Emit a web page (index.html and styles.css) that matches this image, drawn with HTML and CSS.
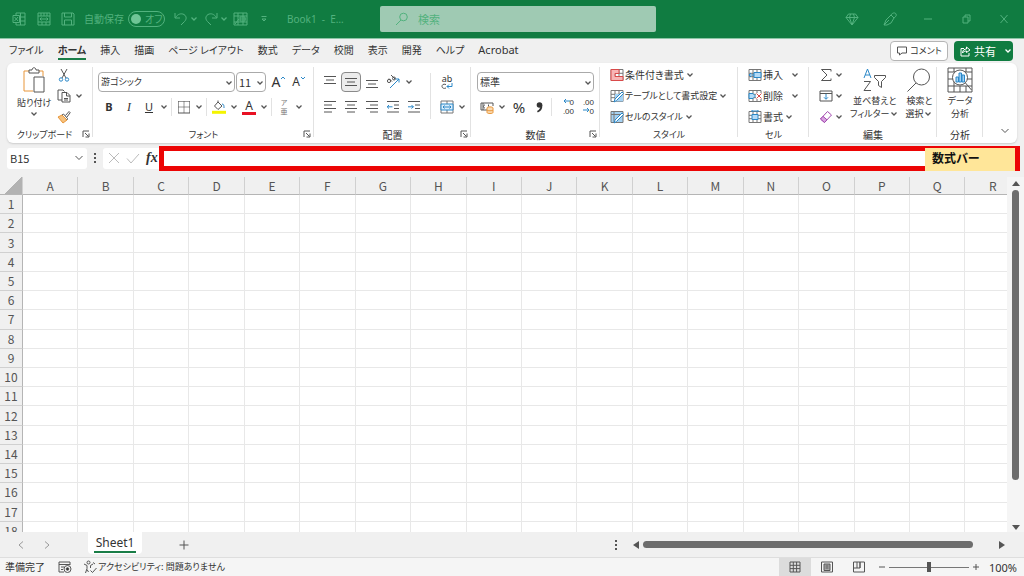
FILE: index.html
```html
<!DOCTYPE html>
<html lang="ja">
<head>
<meta charset="utf-8">
<title>Book1 - Excel</title>
<link rel="stylesheet" href="styles.css">
</head>
<body>
<svg class="defs" aria-hidden="true">
  <symbol id="chev" viewBox="0 0 8 8"><path d="M2 2.800 4 4.800l2-2"/></symbol>
  <symbol id="launch" viewBox="0 0 8 8"><path d="M1 7V1h6M3 3l3.500 3.500M7 3.500V7H3.500"/></symbol>
  <symbol id="cells" viewBox="0 0 14 14"><path stroke="#777" d="M1 1.500h12v11H1zM1 5.300h12M1 8.700h12M5 1.500v11M9 1.500v11"/></symbol>
</svg>

<header class="title">
  <div class="title-left">
    <svg class="i16 t-app" viewBox="0 0 16 16"><path d="M5 4V2h9v12H5v-2M9.500 2v12M9 6h5M9 10h5M2 4.500h6.500v7H2zM3.500 6l3.500 4M7 6l-3.500 4"/></svg>
    <svg class="i16 t-tpl" viewBox="0 0 16 16"><path d="M2 2h12v12H2zM2 5h12M5 2v3M8 2v3M11 2v3M2 11h12M4 8h8M5.500 6.500 4 8l1.500 1.500M10.500 6.500 12 8l-1.500 1.500M6 11v3M10 11v3"/></svg>
    <svg class="i16 t-save" viewBox="0 0 16 16"><path d="M2 2h11l1 1v11H2zM4.500 2v4h7V2M4.500 14V9h7v5"/></svg>
    <label class="auto" for="autosave">自動保存</label>
    <span class="switch"><input id="autosave" type="checkbox"><span class="switch-text">オフ</span></span>
    <button class="plain" aria-label="元に戻す"><svg class="i16" viewBox="0 0 16 16"><path d="M2 2v5h5M2.500 6.500C5 3 8 2 11 3.500c3 2 2.500 5 .5 7L8 14"/></svg></button>
    <svg class="chev"><use href="#chev"/></svg>
    <button class="plain t-redo" aria-label="やり直し"><svg class="i16" viewBox="0 0 16 16"><path d="M14 2v5H9M13.500 6.500C11 3 8 2 5 3.500c-3 2-2.500 5-.5 7L8 14"/></svg></button>
    <svg class="chev"><use href="#chev"/></svg>
    <svg class="i16 t-grid" viewBox="0 0 16 16"><path d="M1 2h13v12H1zM1 5h13M1 11h13M5 2v12M10 2v12M7 6h5v4H7zM2 13l4-5M7 8h6"/></svg>
    <svg class="t-more" viewBox="0 0 8 8"><path d="M1.500 1.500h5M2 4h4L4 6z"/></svg>
    <span class="book">Book1&nbsp; -&nbsp; E…</span>
  </div>
  <label class="search"><svg class="i16" viewBox="0 0 16 16"><circle cx="9.500" cy="6" r="3.800"/><path d="M7 9l-5 5"/></svg><input type="text" placeholder="検索" aria-label="検索"></label>
  <div class="title-right">
    <button class="plain" aria-label="Premium"><svg class="i16" viewBox="0 0 16 16"><path d="M4.500 3h7L14 6.500 8 14 2 6.500zM2 6.500h12M6.500 3 5.500 6.500 8 14l2.500-7.500L9.500 3"/></svg></button>
    <button class="plain" aria-label="描画"><svg class="i16" viewBox="0 0 16 16"><path d="M2 14l2-5 5-5 3 3-3 5-4 2zM9 4c1-2 4-3 5-1s-1 3-2 4M2 14l5-5"/></svg></button>
    <button class="plain" aria-label="最小化"><svg class="i16" viewBox="0 0 16 16"><path d="M4 8h8"/></svg></button>
    <button class="plain" aria-label="元のサイズに戻す"><svg class="i16" viewBox="0 0 16 16"><path d="M5 6h5v6H5zM7 6V4h5v6h-2"/></svg></button>
    <button class="plain" aria-label="閉じる"><svg class="i16" viewBox="0 0 16 16"><path d="M4.500 4l7 8M11.500 4l-7 8"/></svg></button>
  </div>
</header>

<nav class="tabs">
  <a href="#">ファイル</a><a href="#" class="on">ホーム</a><a href="#">挿入</a><a href="#">描画</a><a href="#">ページ レイアウト</a><a href="#">数式</a><a href="#">データ</a><a href="#">校閲</a><a href="#">表示</a><a href="#">開発</a><a href="#">ヘルプ</a><a href="#" class="latin">Acrobat</a>
  <button class="comment"><svg class="i12" viewBox="0 0 12 12"><path d="M1.500 2h9v6H6L3.500 10V8h-2z"/></svg>コメント</button>
  <button class="share"><svg class="i12" viewBox="0 0 12 12"><path d="M5 3.500H2V11h8V8M3.500 8c0-3 2-4 4-4V2L11 5 7.500 7.500V6c-2 0-3 .5-4 2z"/></svg>共有<svg class="chev"><use href="#chev"/></svg></button>
</nav>

<section class="ribbon">
  <div class="group clip">
    <div class="body">
      <button class="big"><svg class="paste" viewBox="0 0 24 28"><path class="or" d="M7 4H2v20h9M17 4h4v5"/><path d="M7 6V3h3c0-3 4-3 4 0h3v3zM12 10h10v15H12z" fill="#fff"/></svg>貼り付け<svg class="chev"><use href="#chev"/></svg></button>
      <div class="stack">
        <button class="plain" aria-label="切り取り"><svg class="i14" viewBox="0 0 14 14"><path d="M4 1l5 9M10 1 5 10"/><g class="bl"><circle cx="4" cy="11.500" r="1.700"/><circle cx="10" cy="11.500" r="1.700"/></g></svg></button>
        <button class="plain" aria-label="コピー"><svg class="i14" viewBox="0 0 14 14"><path d="M5 11H1V1h5l1.500 1.500M5 3.500h5l3 3V13H5zM9.500 3.500V7H13M7 9.500h4M7 11h4"/></svg></button>
        <button class="plain" aria-label="書式のコピー"><svg class="i14" viewBox="0 0 14 14"><path class="or" fill="#f6c27e" d="M1 7l4-2 5 5-4 3z"/><path d="M5 5l1.500-1 4 4.500L10 10M8.500 5.500 12 1.500l1.200 1.200L10 7"/></svg></button>
      </div>
      <svg class="chev copy-chev"><use href="#chev"/></svg>
    </div>
    <div class="cap kana">クリップボード<button class="launch" aria-label="クリップボードの設定"><svg><use href="#launch"/></svg></button></div>
  </div>

  <div class="group font">
    <div class="body rows">
      <div class="row">
        <span class="sel grow kana"><select aria-label="フォント"><option>游ゴシック</option></select><svg class="chev"><use href="#chev"/></svg></span>
        <span class="sel size"><select aria-label="サイズ"><option>11</option></select><svg class="chev"><use href="#chev"/></svg></span>
        <button class="tool letter lg">A<svg class="tick" viewBox="0 0 6 6"><path d="M1 4l2-2 2 2"/></svg></button>
        <button class="tool letter">A<svg class="tick" viewBox="0 0 6 6"><path d="M1 2l2 2 2-2"/></svg></button>
      </div>
      <div class="row inset">
        <button class="tool letter b">B</button><button class="tool letter i">I</button><button class="tool letter u">U</button><svg class="chev"><use href="#chev"/></svg>
        <i class="sep"></i>
        <button class="tool" aria-label="罫線"><svg class="i14" viewBox="0 0 14 14"><path d="M1 1.500h12M1.500 1v12M12.500 1v12M7 1v12M1 7h12" opacity=".6"/><path d="M1 13h12"/></svg></button><svg class="chev"><use href="#chev"/></svg>
        <i class="sep"></i>
        <button class="tool" aria-label="塗りつぶしの色"><svg class="i14" viewBox="0 0 14 14"><path d="M6 2l4 4-4 3.500L2.500 6zM6 2V.5"/><path class="bl" d="M10 4c2 0 2 2 2 4"/><path class="yl" d="M0 12.300h14"/></svg></button><svg class="chev"><use href="#chev"/></svg>
        <button class="tool letter fontcolor">A</button><svg class="chev"><use href="#chev"/></svg>
        <i class="sep"></i>
        <button class="tool ruby"><span>ア</span><span>亜</span></button><svg class="chev"><use href="#chev"/></svg>
      </div>
    </div>
    <div class="cap kana">フォント<button class="launch" aria-label="フォントの設定"><svg><use href="#launch"/></svg></button></div>
  </div>

  <div class="group align">
    <div class="body">
      <div class="rows">
        <div class="row gap1">
          <button class="tool" aria-label="上揃え"><svg class="i14" viewBox="0 0 14 14"><path d="M1 1.500h12M3 5h8M1 8.500h12"/></svg></button>
          <button class="tool pressed" aria-label="上下中央揃え"><svg class="i14" viewBox="0 0 14 14"><path d="M1 3.500h12M3 7h8M1 10.500h12"/></svg></button>
          <button class="tool" aria-label="下揃え"><svg class="i14" viewBox="0 0 14 14"><path d="M1 5.500h12M3 9h8M1 12.500h12"/></svg></button>
          <button class="tool" aria-label="方向"><svg class="i14" viewBox="0 0 14 14"><circle cx="3" cy="6" r="1.600"/><path d="M3 3.500l3 3M5 0l4 4"/><circle cx="8" cy="3.500" r="1.500"/><path class="bl" d="M4 13 13 4M9.500 4H13v3.500"/></svg></button><svg class="chev"><use href="#chev"/></svg>
        </div>
        <div class="row gap1">
          <button class="tool" aria-label="左揃え"><svg class="i14" viewBox="0 0 14 14"><path d="M1 1.500h12M1 5h8M1 8.500h12M1 12h8"/></svg></button>
          <button class="tool" aria-label="中央揃え"><svg class="i14" viewBox="0 0 14 14"><path d="M1 1.500h12M3 5h8M1 8.500h12M3 12h8"/></svg></button>
          <button class="tool" aria-label="右揃え"><svg class="i14" viewBox="0 0 14 14"><path d="M1 1.500h12M5 5h8M1 8.500h12M5 12h8"/></svg></button>
          <button class="tool" aria-label="インデントを減らす"><svg class="i14" viewBox="0 0 14 14"><path d="M1 1.500h12M8 5h5M8 8.500h5M1 12h12"/><path class="bl" d="M6.500 6.800H1M3 5 1.200 6.800 3 8.600"/></svg></button>
          <button class="tool" aria-label="インデントを増やす"><svg class="i14" viewBox="0 0 14 14"><path d="M1 1.500h12M8 5h5M8 8.500h5M1 12h12"/><path class="bl" d="M1 6.800h5.500M4.500 5l1.800 1.800-1.800 1.800"/></svg></button>
        </div>
      </div>
      <i class="sep tall"></i>
      <div class="rows">
        <div class="row"><button class="tool wrap"><span>ab</span><svg class="wrapline" viewBox="0 0 12 7"><path d="M5 1.500C2 .5 1 2 1 3.500S3 6 5 5"/><path class="bl" d="M11 0v3.500H6M8 1.500l-2 2 2 2"/></svg></button></div>
        <div class="row"><button class="tool" aria-label="セルを結合"><svg class="i14" viewBox="0 0 14 14"><path stroke="#777" d="M1 1h12v12H1zM7 1v3M7 10v3"/><path class="bl" fill="#dceefb" d="M1 4h12v6H1z"/><path class="bl" d="M3 7h8M4.500 5.500 3 7l1.500 1.500M9.500 5.500 11 7 9.500 8.500"/></svg></button><svg class="chev"><use href="#chev"/></svg></div>
      </div>
    </div>
    <div class="cap">配置<button class="launch" aria-label="配置の設定"><svg><use href="#launch"/></svg></button></div>
  </div>

  <div class="group number">
    <div class="body rows">
      <div class="row"><span class="sel grow"><select aria-label="表示形式"><option>標準</option></select><svg class="chev"><use href="#chev"/></svg></span></div>
      <div class="row">
        <button class="tool" aria-label="通貨"><svg class="i14" viewBox="0 0 14 14"><path d="M7 10H1V3h12v3M5 5c-2 0-2 3 0 3M3 3v7M8.500 4.500v2"/><path class="or" fill="#fbdcb4" d="M7 8c0-1.500 6-1.500 6 0v4.500c0 1.300-6 1.300-6 0z"/><path class="or" d="M7 10c0 1 6 1 6 0"/></svg></button><svg class="chev"><use href="#chev"/></svg>
        <button class="tool pct">%</button>
        <button class="tool" aria-label="桁区切り"><svg class="i14" viewBox="0 0 14 14"><circle cx="7.500" cy="5" r="2.800" fill="#333" stroke="none"/><path stroke="#333" stroke-width="1.800" d="M9.400 5c.2 3-1.200 5.500-4 6.800"/></svg></button>
        <i class="sep"></i>
        <button class="tool dec"><span><svg class="arr" viewBox="0 0 7 6"><path class="bl" d="M7 3H1M3 1 1 3l2 2"/></svg>0</span><span>.00</span></button>
        <button class="tool dec"><span>.00</span><span><svg class="arr" viewBox="0 0 7 6"><path class="bl" d="M0 3h6M4 1l2 2-2 2"/></svg>0</span></button>
      </div>
    </div>
    <div class="cap">数値<button class="launch" aria-label="数値の設定"><svg><use href="#launch"/></svg></button></div>
  </div>

  <div class="group style">
    <div class="body list">
      <button class="item"><svg class="i14" viewBox="0 0 14 14"><use href="#cells"/><path class="rd" fill="#f7b5b5" d="M1 1.500h8v4H5v3h8v4H1z"/></svg>条件付き書式<svg class="chev"><use href="#chev"/></svg></button>
      <button class="item kana"><svg class="i14" viewBox="0 0 14 14"><use href="#cells"/><path fill="#a5d2f3" stroke="none" d="M5 5h8v7.500H5z"/><path class="bl" fill="#fff" d="M4 13l1-3 7-7 1.500 1.500-7 7z"/></svg>テーブルとして書式設定<svg class="chev"><use href="#chev"/></svg></button>
      <button class="item kana"><svg class="i14" viewBox="0 0 14 14"><path fill="#a5d2f3" stroke="#777" d="M1 1.500h12v11H1zM1 4.500h12M4 1.500v11"/><path class="bl" fill="#fff" d="M4 13l1-3 7-7 1.500 1.500-7 7z"/></svg>セルのスタイル<svg class="chev"><use href="#chev"/></svg></button>
    </div>
    <div class="cap kana">スタイル</div>
  </div>

  <div class="group cell">
    <div class="body list">
      <button class="item wide"><svg class="i14" viewBox="0 0 14 14"><use href="#cells"/><path class="bl" fill="#b5dbf7" d="M6 4.500h7v5H6z"/><path class="bl" d="M6 7H1M3 5 1 7l2 2"/></svg>挿入<svg class="chev"><use href="#chev"/></svg></button>
      <button class="item wide"><svg class="i14" viewBox="0 0 14 14"><use href="#cells"/><path class="bl" fill="#b5dbf7" d="M1 4.500h4L7.500 7 5 9.500H1z"/><path fill="#fff" stroke="none" d="M8 4h6v6H8z"/><path class="rd" d="M8.500 4.500l5 5M13.500 4.500l-5 5"/></svg>削除<svg class="chev"><use href="#chev"/></svg></button>
      <button class="item"><svg class="i14" viewBox="0 0 14 14"><use href="#cells"/><path class="bl" fill="#b5dbf7" d="M4 4.500h6v5H4z"/><path class="bl" d="M4 1h6M4 0v2M10 0v2"/></svg>書式<svg class="chev"><use href="#chev"/></svg></button>
    </div>
    <div class="cap kana">セル</div>
  </div>

  <div class="group edit">
    <div class="body">
      <div class="list">
        <button class="item"><svg class="i14" viewBox="0 0 14 14"><path d="M12 3.500V1.500H2.500L8 7l-5.500 5.500H12v-2"/></svg><svg class="chev"><use href="#chev"/></svg></button>
        <button class="item"><svg class="i14" viewBox="0 0 14 14"><path d="M1 2h12v10H1zM1 4.500h12"/><path class="bl" d="M7 5v5M5 8.300l2 2 2-2"/></svg><svg class="chev"><use href="#chev"/></svg></button>
        <button class="item"><svg class="i14" viewBox="0 0 14 14"><path stroke="#a34bb0" d="M1.500 9 8.500 1.500l4 3.500-7 7.500z"/><path stroke="#a34bb0" fill="#d9a3e0" d="M1.500 9l2.500-2.700 4 3.500-2.500 2.700z"/></svg><svg class="chev"><use href="#chev"/></svg></button>
      </div>
      <button class="big sortby"><svg class="sort" viewBox="0 0 26 26"><path class="bl" d="M2 11 5.500 2 9 11M3.200 8h4.600"/><path d="M2 14.500h6.500L2 23.500h7M12.500 8.500h11v2l-4 4v6l-3-2v-4l-4-4z"/></svg><span>並べ替えと</span><span>フィルター<svg class="chev"><use href="#chev"/></svg></span></button>
      <button class="big"><svg class="sort" viewBox="0 0 26 26"><circle cx="15.500" cy="10" r="8"/><path d="M10 16 1.500 24.500"/></svg><span>検索と</span><span>選択<svg class="chev"><use href="#chev"/></svg></span></button>
    </div>
    <div class="cap">編集</div>
  </div>

  <div class="group data">
    <div class="body">
      <button class="big"><svg class="sort" viewBox="0 0 26 26"><path d="M1 1h24v24H1zM1 5h24M1 12h24M1 19h24M7 1v4M7 12v13M13 19v6M19 1v4M19 19v6"/><circle cx="13" cy="10.500" r="7.500" fill="#fff"/><path d="M18.500 16l6 7"/><path class="bl" fill="#9fd0f5" d="M9 10h2.500v5H9zM12 6h2.500v9H12zM15 8h2.500v7H15z"/></svg><span>データ</span><span>分析</span></button>
    </div>
    <div class="cap">分析</div>
  </div>
  <button class="plain collapse" aria-label="リボンを折りたたむ"><svg viewBox="0 0 10 8"><path d="M1.500 2 5 5.500 8.500 2"/></svg></button>
</section>

<section class="fbar">
  <label class="namebox"><input type="text" value="B15" aria-label="名前ボックス"><svg viewBox="0 0 10 8"><path d="M1.500 2 5 5.500 8.500 2"/></svg></label>
  <svg class="dots" viewBox="0 0 4 12"><path d="M1 1h2v2H1zM1 5h2v2H1zM1 9h2v2H1z"/></svg>
  <div class="fx">
    <button class="plain" aria-label="キャンセル"><svg class="i14" viewBox="0 0 14 14"><path d="M2 2l10 10M12 2 2 12"/></svg></button>
    <button class="plain" aria-label="入力"><svg class="i14" viewBox="0 0 14 14"><path d="M1 7.500 5 12l8-9"/></svg></button>
    <button class="plain fxb">fx</button>
  </div>
  <div class="formula"><input type="text" aria-label="数式バー"><span class="note">数式バー</span></div>
</section>

<main class="sheet">
  <div class="view"><table class="grid"><thead><tr id="cols"><th class="corner"></th></tr></thead><tbody id="rows"></tbody></table></div>
  <div class="vbar"><i class="up"></i><i class="vthumb"></i><i class="down"></i></div>
</main>

<section class="bottom">
  <div class="arrows">
    <button class="plain" aria-label="前のシート"><svg viewBox="0 0 8 10"><path d="M6 1.500 2 5l4 3.500"/></svg></button>
    <button class="plain" aria-label="次のシート"><svg viewBox="0 0 8 10"><path d="M2 1.500 6 5 2 8.500"/></svg></button>
  </div>
  <button class="stab"><span>Sheet1</span></button>
  <button class="plain add" aria-label="新しいシート"><svg viewBox="0 0 10 10"><path d="M5 .5v9M.5 5h9"/></svg></button>
  <div class="hbar">
    <svg class="dots" viewBox="0 0 4 12"><path d="M1 1h2v2H1zM1 5h2v2H1zM1 9h2v2H1z"/></svg>
    <i class="left"></i><div class="track"><i class="hthumb"></i></div><i class="right"></i>
  </div>
</section>

<footer class="status">
  <span>準備完了</span>
  <svg class="i14 rec" viewBox="0 0 14 14"><path d="M6 12H1V2h11v3M1 4.500h11M3 7h3M3 9.500h2"/><circle cx="9.500" cy="9" r="3.500"/><circle cx="9.500" cy="9" r="1.300" fill="#333"/></svg>
  <svg class="i14 acc" viewBox="0 0 14 14"><circle cx="5.500" cy="2.500" r="1.500"/><path d="M1 4l3 1.500v3L2.500 13M10 4 7.500 5.500V8M4 9.500l1.500 2.500M10 2.500 12 4M7.500 10.500l2 2 4-4.500"/></svg>
  <span class="kana">アクセシビリティ: 問題ありません</span>
  <div class="views">
    <button class="view-btn on" aria-label="標準"><svg class="i14" viewBox="0 0 14 14"><path d="M2 2h10v10H2zM2 5.300h10M2 8.600h10M5.300 2v10M8.600 2v10"/></svg></button>
    <button class="view-btn" aria-label="ページ レイアウト"><svg class="i14" viewBox="0 0 14 14"><path d="M1.500 2h11v10h-11z"/><path fill="#aaa" d="M4 4h6v6.500H4z"/><path d="M5.500 6h3M5.500 8h3"/></svg></button>
    <button class="view-btn" aria-label="改ページ プレビュー"><svg class="i14" viewBox="0 0 14 14"><path d="M1.500 2h11v10h-11zM1.500 8H8V2M5 2v6M8 8V2"/></svg></button>
  </div>
  <button class="plain zoom-btn" aria-label="縮小"><svg viewBox="0 0 8 8"><path d="M1 4h6"/></svg></button>
  <input class="zoom" type="range" min="0" max="100" value="50" aria-label="ズーム">
  <button class="plain zoom-btn" aria-label="拡大"><svg viewBox="0 0 8 8"><path d="M1 4h6M4 1v6"/></svg></button>
  <span class="pct100">100%</span>
</footer>
<script src="script.js"></script>
</body>
</html>
```

FILE: styles.css
```css
* { box-sizing: border-box; }
html, body { height: 100%; }
body {
  margin: 0;
  display: flex;
  flex-direction: column;
  min-height: 100vh;
  overflow: hidden;
  background: #f0f0f0;
  color: #333;
  font: 10px/12px "Noto Sans CJK JP", sans-serif;
  font-feature-settings: "palt";
}
button, input, select { font: inherit; font-feature-settings: inherit; color: inherit; }
button { border: 0; padding: 0; background: none; white-space: nowrap; }
svg { fill: none; stroke: #555; flex: none; display: block; }
i { flex: none; }
.defs { position: absolute; width: 0; height: 0; }
.plain { display: flex; align-items: center; justify-content: center; }
.kana { font-size: 9px; }
.chev { width: 10px; height: 10px; }
.i12 { width: 12px; height: 12px; }
.i14 { width: 14px; height: 14px; }
.i16 { width: 16px; height: 16px; }
.or { stroke: #e8963a; }
.bl { stroke: #2b88c8; }
.rd { stroke: #d94a4a; }
.yl { stroke: #f4f400; stroke-width: 3; }

/* title bar */
.title {
  display: grid;
  grid-template-columns: 380fr 276fr 368fr;
  align-items: center;
  height: 39px;
  background: #107c41;
  border-bottom: 1px solid #8cc5a5;
  color: #52b27e;
}
.title svg { stroke: #52b27e; }
.title-left { display: flex; align-items: center; padding-left: 11px; white-space: nowrap; overflow: hidden; }
.t-tpl { margin-left: 9px; }
.t-save { margin-left: 8px; }
.auto { margin-left: 8px; width: 44px; }
.switch { position: relative; display: flex; width: 37px; height: 16px; margin-right: 8px; border: 1px solid #52b27e; border-radius: 8px; }
.switch input { appearance: none; margin: 2px; width: 10px; height: 10px; border-radius: 5px; background: #6fc596; }
.switch-text { padding-left: 2px; line-height: 14px; }
.t-redo { margin-left: 4px; }
.t-grid { margin-left: 4px; }
.t-more { width: 8px; height: 8px; margin: 0 19px 0 11px; }
.book { font-family: "Noto Sans", sans-serif; }
.search { display: flex; align-items: center; height: 26px; padding-left: 14px; background: #9fcab3; border-radius: 2px; }
.search input { flex: 1; min-width: 0; border: 0; background: none; margin-left: 8px; padding: 0; font-size: 11px; }
.search input::placeholder { color: #52b27e; }
.title-right { display: flex; justify-content: flex-end; gap: 22px; padding-right: 12px; }

/* ribbon tabs */
.tabs { display: flex; align-items: center; gap: 14px; height: 24px; padding: 0 11px 0 9px; line-height: 16px; white-space: nowrap; }
.tabs a { color: #333; text-decoration: none; border-bottom: 2px solid transparent; }
.tabs a.on { font-weight: 700; border-color: #1a7d47; }
.tabs a.latin { font-family: "Noto Sans", sans-serif; font-size: 11px; }
.comment, .share { display: flex; align-items: center; height: 20px; border-radius: 4px; }
.comment { margin-left: auto; width: 58px; justify-content: center; gap: 2px; background: #fff; border: 1px solid #b5b5b5; font-size: 9px; }
.share { margin-left: -8px; width: 59px; padding-left: 5px; gap: 3px; background: #107c41; color: #fff; font-size: 11px; }
.share svg { stroke: #fff; }
.share .chev { margin-left: auto; }

/* ribbon */
.ribbon {
  position: relative;
  display: grid;
  grid-template-columns: 86fr 221fr 157fr 129fr 138fr 71fr 128fr 46fr 34fr;
  min-height: 80px;
  margin: 0 7px;
  background: #fff;
  border-radius: 6px;
  box-shadow: 0 1px 2px #ccc;
}
.group { display: flex; flex-direction: column; min-width: 0; position: relative; }
.group::after { content: ""; position: absolute; right: 0; top: 4px; bottom: 6px; width: 1px; background: #e2e2e2; }
.body { flex: 1; display: flex; }
.cap { display: flex; align-items: center; justify-content: center; height: 17px; position: relative; }
.launch { position: absolute; right: 3px; top: 4px; }
.launch svg { width: 8px; height: 8px; }
.rows { display: flex; flex-direction: column; gap: 5px; padding-top: 9px; }
.row { display: flex; align-items: center; height: 20px; }
.gap1 { gap: 1px; }
.tool { display: flex; align-items: center; justify-content: center; width: 20px; height: 20px; flex: none; position: relative; }
.pressed { background: #ececec; border: 1px solid #8a8a8a; border-radius: 4px; }
.sep { width: 1px; height: 18px; margin: 0 2px; background: #e2e2e2; }
.tall { height: 46px; margin: 10px 6px 0; }
.big { display: flex; flex-direction: column; align-items: center; line-height: 13px; }
.big span { display: flex; align-items: center; }

.clip .body { padding: 4px 0 0 10px; }
.clip .big { font-size: 9px; }
.clip .cap { padding-right: 11px; }
.paste { width: 24px; height: 28px; margin-bottom: 1px; }
.stack { display: flex; flex-direction: column; gap: 7px; margin: 1px 3px 0 6px; }
.copy-chev { margin-top: 24px; }

.font .body { padding-left: 5px; }
.inset { padding-left: 1px; }
.sel { position: relative; display: flex; height: 20px; border: 1px solid #aaa; border-radius: 4px; }
.sel select { appearance: none; width: 100%; border: 0; padding: 0 12px 0 2px; background: none; }
.sel .chev { position: absolute; right: 0; top: 5px; pointer-events: none; }
.font .grow { width: 137px; margin-right: 1px; }
.size { width: 30px; margin-right: 3px; font-size: 11px; }
.letter { font: 12px/20px "Noto Sans", sans-serif; }
.lg { font-size: 14px; }
.tick { width: 6px; height: 6px; stroke: #2b88c8; align-self: flex-start; margin-top: 3px; }
.b { font-weight: 700; font-size: 11px; }
.i { font: italic 12px "Liberation Serif", serif; }
.u { text-decoration: underline; font-size: 11px; }
.fontcolor { margin-left: 3px; width: 14px; height: 15px; line-height: 13px; border-bottom: 3px solid #e81123; }
.fontcolor + .chev { margin-left: 3px; }
.ruby { flex-direction: column; font-size: 7px; line-height: 9px; color: #777; }

.align .body { padding-left: 6px; }
.wrap { flex-direction: column; font: 9px/8px "Noto Sans", sans-serif; }
.wrapline { width: 12px; height: 7px; }

.number .body { padding: 9px 6px 0; }
.number .grow { width: 100%; }
.pct { font: 15px "Noto Sans", sans-serif; margin-left: 2px; }
.dec { flex-direction: column; align-items: flex-end; font: 8px/9px "Liberation Sans", sans-serif; }
.dec span { display: flex; }
.arr { width: 7px; height: 6px; }

.list { display: flex; flex-direction: column; gap: 7px; padding-top: 5px; }
.item { display: flex; align-items: center; height: 14px; gap: 1px; }
.style .list { padding-left: 10px; }
.cell .list { padding-left: 10px; }
.wide .chev { margin-left: 6px; }
.edit .body, .data .body { padding-left: 10px; gap: 6px; }
.edit .big, .data .big { padding-top: 4px; font-size: 9px; }
.sort { width: 26px; height: 26px; margin-bottom: 1px; }
.collapse { align-self: end; justify-self: center; height: 24px; margin-left: 10px; }
.collapse svg, .namebox svg { width: 10px; height: 8px; }

/* formula bar */
.fbar { display: flex; align-items: center; height: 34px; padding: 0 4px 4px 7px; }
.namebox { display: flex; align-items: center; width: 80px; height: 21px; padding: 0 3px; background: #fff; border-radius: 3px; }
.namebox input { flex: 1; min-width: 0; border: 0; padding: 0; font-size: 11px; background: none; }
.dots { width: 4px; height: 12px; stroke: none; fill: #555; }
.fbar .dots { margin: 0 6px; }
.fx { display: flex; gap: 5px; width: 56px; height: 21px; padding-left: 4px; background: #fff; border-radius: 3px 0 0 3px; }
.fx svg { stroke: #bbb; }
.fxb { font: italic bold 14px "Liberation Serif", serif; margin-left: 1px; }
.formula { position: relative; flex: 1; height: 25px; border: 5px solid #ec0505; background: #fff; }
.formula input { width: 100%; height: 100%; border: 0; padding: 0; background: none; }
.note { position: absolute; right: 0; top: -3px; width: 90px; height: 23px; padding-left: 7px; background: #ffe699; color: #111; font-weight: 700; font-size: 12px; line-height: 20px; }

/* sheet */
.sheet { flex: 1; display: flex; min-height: 0; }
.view { flex: 1; min-width: 0; overflow: hidden; background: #fff; }
.grid { table-layout: fixed; border-collapse: separate; border-spacing: 0; width: calc(100% + 14px); height: calc(100% + 9px); font-size: 12px; line-height: 14px; font-feature-settings: normal; }
th, td { padding: 0; border: 0 solid #e8e8e8; border-right-width: 1px; border-bottom-width: 1px; }
th { background: #f0f0f0; font-weight: 400; color: #555; border-color: #d0d0d0; }
thead th { height: 18px; border-bottom-color: #b5b5b5; }
tbody th { border-right-color: #b5b5b5; }
.corner { width: 23px; background: linear-gradient(135deg, #f0f0f0 54%, #b2b2b2 54%); }
.vbar { width: 17px; display: flex; flex-direction: column; align-items: center; padding: 4px 0 2px; background: #f5f5f5; }
.vthumb { flex: 1 1 0; width: 7px; margin: 4px 0 45px; border-radius: 4px; background: #6d6d6d; }
.up, .down { border: 4px solid transparent; }
.up { border-top: 0; border-bottom: 5px solid #555; }
.down { border-bottom: 0; border-top: 5px solid #555; }

/* sheet tabs */
.bottom { display: flex; height: 26px; align-items: center; border-bottom: 1px solid #dedede; }
.arrows { display: flex; gap: 18px; width: 88px; padding-left: 17px; }
.arrows svg { width: 8px; height: 10px; stroke: #999; }
.stab { align-self: flex-start; height: 22px; width: 54px; background: #fff; border-radius: 0 0 4px 4px; font: 12px/17px "Noto Sans", sans-serif; }
.stab span { display: block; margin: 0 6px; border-bottom: 2px solid #1a7d47; }
.add { margin-left: 37px; }
.add svg { width: 10px; height: 10px; }
.hbar { display: flex; align-items: center; margin-left: auto; width: 40%; padding-right: 19px; }
.left, .right { border: 4px solid transparent; }
.left { margin-left: 15px; border-left: 0; border-right: 6px solid #555; }
.right { border-right: 0; border-left: 6px solid #555; }
.track { flex: 1; padding: 0 26px 0 4px; }
.hthumb { display: block; height: 7px; border-radius: 4px; background: #6d6d6d; }

/* status bar */
.status { display: flex; align-items: center; height: 18px; padding: 0 7px 0 5px; background: #f5f5f5; white-space: nowrap; }
.rec { margin: 0 11px 0 13px; }
.acc { margin-right: 1px; }
.views { display: flex; margin-left: auto; }
.view-btn { width: 32px; height: 18px; display: flex; align-items: center; justify-content: center; }
.view-btn.on { background: #dcdcdc; }
.zoom-btn svg { width: 8px; height: 8px; }
.zoom-btn { margin: 0 3px; }
.zoom { appearance: none; width: 80px; height: 11px; margin: 0; background: linear-gradient(#777, #777) center / 100% 1px no-repeat; }
.zoom::-webkit-slider-thumb { appearance: none; width: 4px; height: 10px; background: #555; }
.pct100 { font: 11px "Noto Sans", sans-serif; margin-left: 6px; }
```

FILE: script.js
```js
const cols = document.getElementById("cols");
const rows = document.getElementById("rows");
const letters = "ABCDEFGHIJKLMNOPQR";
for (const letter of letters) {
  const th = document.createElement("th");
  th.scope = "col";
  th.textContent = letter;
  cols.append(th);
}
for (let n = 1; n <= 18; n++) {
  const tr = document.createElement("tr");
  const th = document.createElement("th");
  th.scope = "row";
  th.textContent = n;
  tr.append(th);
  for (let c = 0; c < letters.length; c++) tr.append(document.createElement("td"));
  rows.append(tr);
}
```
